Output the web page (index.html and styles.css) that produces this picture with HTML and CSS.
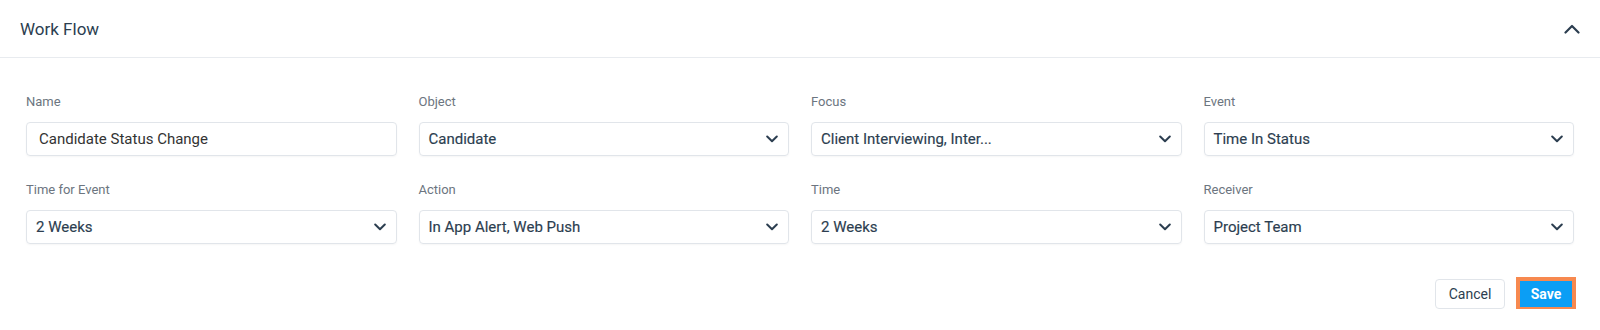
FILE: index.html
```html
<!DOCTYPE html>
<html lang="en">
<head>
    <meta charset="UTF-8">
    <meta name="viewport" content="width=device-width, initial-scale=1.0">
    <title>Work Flow</title>
    <link rel="stylesheet" href="styles.css">
</head>
<body>
    <div class="card">
        <div class="card-header">
            <h2>Work Flow</h2>
            <svg class="toggle" width="16" height="10" viewBox="0 0 16 10"><path d="M1.5 8.5 L8 2 L14.5 8.5" fill="none" stroke="#2c3e50" stroke-width="2.2" stroke-linecap="round" stroke-linejoin="round"/></svg>
        </div>
        <div class="card-body">
            <div class="form-grid">
                <div class="field">
                    <label>Name</label>
                    <div class="input">Candidate Status Change</div>
                </div>
                <div class="field">
                    <label>Object</label>
                    <div class="select"><span>Candidate</span><svg width="12" height="8" viewBox="0 0 12 8"><path d="M1.2 1.5 L6 6.2 L10.8 1.5" fill="none" stroke="#2c3e50" stroke-width="2" stroke-linecap="round" stroke-linejoin="round"/></svg></div>
                </div>
                <div class="field">
                    <label>Focus</label>
                    <div class="select"><span>Client Interviewing, Inter...</span><svg width="12" height="8" viewBox="0 0 12 8"><path d="M1.2 1.5 L6 6.2 L10.8 1.5" fill="none" stroke="#2c3e50" stroke-width="2" stroke-linecap="round" stroke-linejoin="round"/></svg></div>
                </div>
                <div class="field">
                    <label>Event</label>
                    <div class="select"><span>Time In Status</span><svg width="12" height="8" viewBox="0 0 12 8"><path d="M1.2 1.5 L6 6.2 L10.8 1.5" fill="none" stroke="#2c3e50" stroke-width="2" stroke-linecap="round" stroke-linejoin="round"/></svg></div>
                </div>
                <div class="field">
                    <label>Time for Event</label>
                    <div class="select"><span>2 Weeks</span><svg width="12" height="8" viewBox="0 0 12 8"><path d="M1.2 1.5 L6 6.2 L10.8 1.5" fill="none" stroke="#2c3e50" stroke-width="2" stroke-linecap="round" stroke-linejoin="round"/></svg></div>
                </div>
                <div class="field">
                    <label>Action</label>
                    <div class="select"><span>In App Alert, Web Push</span><svg width="12" height="8" viewBox="0 0 12 8"><path d="M1.2 1.5 L6 6.2 L10.8 1.5" fill="none" stroke="#2c3e50" stroke-width="2" stroke-linecap="round" stroke-linejoin="round"/></svg></div>
                </div>
                <div class="field">
                    <label>Time</label>
                    <div class="select"><span>2 Weeks</span><svg width="12" height="8" viewBox="0 0 12 8"><path d="M1.2 1.5 L6 6.2 L10.8 1.5" fill="none" stroke="#2c3e50" stroke-width="2" stroke-linecap="round" stroke-linejoin="round"/></svg></div>
                </div>
                <div class="field">
                    <label>Receiver</label>
                    <div class="select"><span>Project Team</span><svg width="12" height="8" viewBox="0 0 12 8"><path d="M1.2 1.5 L6 6.2 L10.8 1.5" fill="none" stroke="#2c3e50" stroke-width="2" stroke-linecap="round" stroke-linejoin="round"/></svg></div>
                </div>
            </div>
            <div class="actions">
                <button class="btn btn-cancel">Cancel</button>
                <button class="btn btn-save">Save</button>
            </div>
        </div>
    </div>
</body>
</html>
```

FILE: styles.css
```css
body {
    font-family: 'Roboto', sans-serif;
    margin: 0;
    padding: 0;
    background: #fff;
    color: #2c3e50;
}
.card {
    background: #fff;
}
.card-header {
    height: 57px;
    display: flex;
    align-items: center;
    justify-content: space-between;
    padding: 0 20px;
    border-bottom: 1px solid #e8ebef;
}
.card-header h2 {
    margin: 0;
    font-size: 17px;
    font-weight: 400;
    color: #2c3e50;
}
.card-body {
    padding: 35px 26px 0;
}
.form-grid {
    display: grid;
    grid-template-columns: repeat(4, 1fr);
    column-gap: 22px;
    row-gap: 25px;
}
.field label {
    display: block;
    font-size: 13px;
    line-height: 18px;
    color: #6c7580;
    margin-bottom: 11px;
}
.input, .select {
    height: 34px;
    box-sizing: border-box;
    border: 1px solid #e1e5ea;
    border-radius: 4px;
    box-shadow: 0 1px 2px rgba(0, 0, 0, 0.04);
    display: flex;
    align-items: center;
    font-size: 15px;
}
.input {
    padding: 0 12px;
    color: #333;
}
.select {
    justify-content: space-between;
    padding: 0 10px 0 9px;
    font-weight: 400;
    color: #2c3e50;
    -webkit-text-stroke: 0.15px #2c3e50;
}
.actions {
    display: flex;
    justify-content: flex-end;
    align-items: center;
    gap: 15px;
    margin-top: 35px;
    padding-right: 2px;
}
.btn {
    font-family: 'Roboto', sans-serif;
    font-size: 14px;
    cursor: pointer;
}
.btn-cancel {
    width: 70px;
    height: 30px;
    background: #fff;
    color: #2c3e50;
    border: 1px solid #e1e5ea;
    border-radius: 4px;
}
.btn-save {
    width: 52px;
    height: 26px;
    background: #0b9ef5;
    color: #fff;
    font-weight: 700;
    border: none;
    border-radius: 0;
    outline: 4px solid #f7894f;
}
```
